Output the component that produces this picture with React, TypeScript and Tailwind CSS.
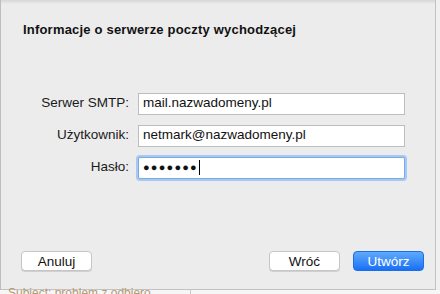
export default function App() {
  const rows = [
    { label: "Serwer SMTP:", value: "mail.nazwadomeny.pl" },
    { label: "Użytkownik:", value: "netmark@nazwadomeny.pl" },
  ];

  return (
    <div
      className="w-[440px] h-[294px] overflow-hidden bg-[#f4f4f4] flex flex-col"
      style={{ fontFamily: '"Liberation Sans", Arial, sans-serif' }}
    >
      <div className="flex h-[290px]">
        {/* window behind, left edge */}
        <div className="w-[1px] bg-[#bdbdbd]" />
        <div className="w-[435px] h-[290px] border-r border-b border-[#c2c2c2] flex flex-col bg-gradient-to-b from-[#d6d6d6] via-[#ececec] via-[4px] to-[#ececec]">
          <h1 className="pl-[22px] pt-[20px] text-[13px] font-bold text-[#111] tracking-[0.2px]">
            Informacje o serwerze poczty wychodzącej
          </h1>

          <div className="mt-[53px] flex flex-col gap-[10px]">
            {rows.map((r) => (
              <div key={r.label} className="flex items-center h-[22px]">
                <div className="w-[128px] text-right text-[13.5px] text-[#1a1a1a]">{r.label}</div>
                <div className="ml-[9px] w-[267px] h-[22px] bg-white border border-[#bdbdbd] flex items-center pl-[4px] text-[13.5px] text-[#111]">
                  {r.value}
                </div>
              </div>
            ))}
            <div className="flex items-center h-[22px]">
              <div className="w-[128px] text-right text-[13.5px] text-[#1a1a1a]">Hasło:</div>
              <div className="ml-[9px] w-[267px] h-[22px] bg-white border border-[#7ba9e6] rounded-[2px] shadow-[0_0_0_2px_#a5c8f4] flex items-center pl-[4px] text-[13px] text-[#111]">
                <span className="tracking-[1.2px] text-[11px] leading-none">●●●●●●●</span>
                <span className="ml-[1px] w-[1px] h-[15px] bg-black" />
              </div>
            </div>
          </div>

          <div className="mt-auto mb-[18px] flex items-center pl-[20px] pr-[11px]">
            <button className="w-[71px] h-[20px] rounded-[4px] bg-white border border-[#c6c6c6] text-[13.5px] text-[#111] shadow-[0_1px_0_#d0d0d0]">
              Anuluj
            </button>
            <div className="flex-1" />
            <button className="w-[71px] h-[20px] rounded-[4px] bg-white border border-[#c6c6c6] text-[13.5px] text-[#111] shadow-[0_1px_0_#d0d0d0]">
              Wróć
            </button>
            <button className="ml-[13px] w-[71px] h-[20px] rounded-[4px] bg-gradient-to-b from-[#5fa9fb] to-[#1670f6] border border-[#1a6fe8] text-[13.5px] text-white">
              Utwórz
            </button>
          </div>
        </div>
        <div className="flex-1 bg-[#f0f0f0]" />
      </div>
      {/* window behind, bottom edge */}
      <div className="flex-1 flex items-start relative bg-[#f6f6f6]">
        <span className="ml-[8px] mt-[-3px] text-[12px] text-[#b59a72] leading-none">Subject: problem z odbiero</span>
        <div className="absolute left-[190px] top-0 w-[1px] h-full bg-[#c9c9c9]" />
      </div>
    </div>
  );
}
